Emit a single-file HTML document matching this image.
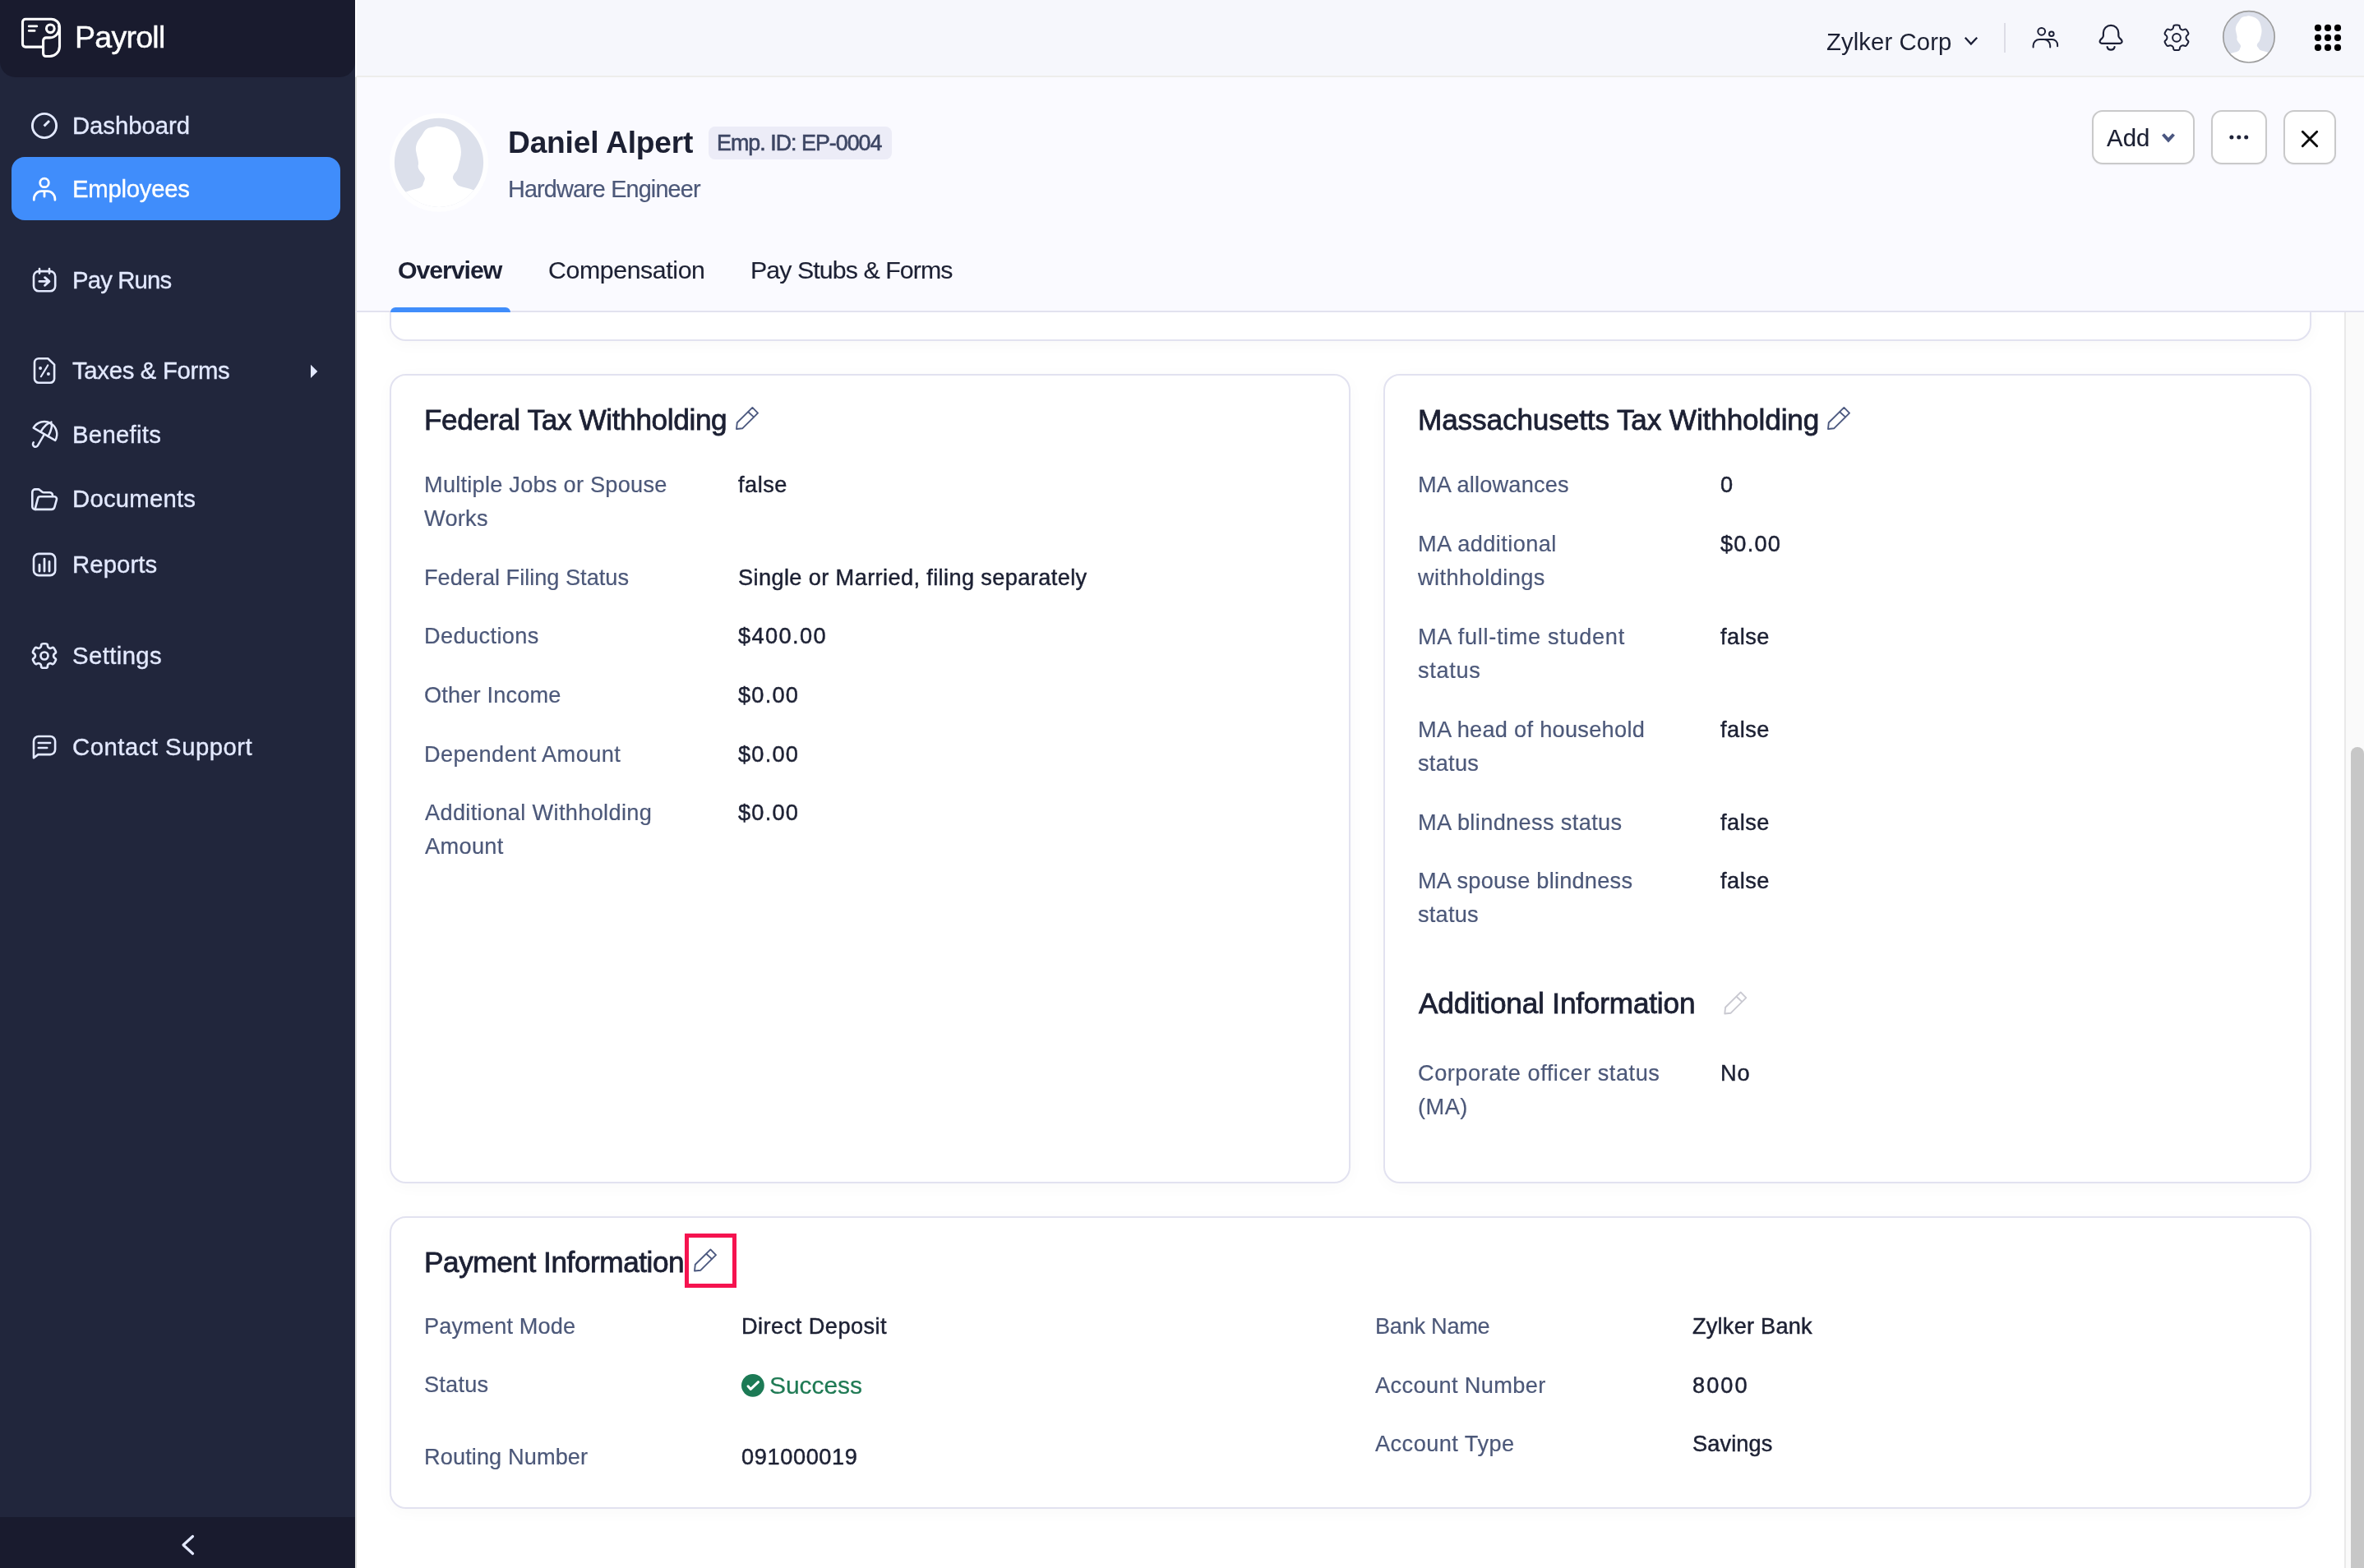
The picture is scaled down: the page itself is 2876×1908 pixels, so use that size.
<!DOCTYPE html>
<html lang="en"><head><meta charset="utf-8"><title>Payroll - Daniel Alpert</title>
<style>
*{box-sizing:border-box;margin:0;padding:0}
html,body{width:2876px;height:1908px;overflow:hidden;background:#fff}
body{position:relative;font-family:"Liberation Sans",sans-serif;}
.t{position:absolute;white-space:nowrap;will-change:transform}
.abs{position:absolute}
#sidebar{position:absolute;left:0;top:0;width:432px;height:1908px;background:#21263c}
#sbhead{position:absolute;left:0;top:0;width:432px;height:94px;background:#191b2e;border-radius:0 0 19px 19px}
#sbfoot{position:absolute;left:0;top:1846px;width:432px;height:62px;background:#191b2e}
#active{position:absolute;left:14px;top:191px;width:400px;height:77px;border-radius:16px;background:#408dfb}
#topbar{position:absolute;left:432px;top:0;width:2444px;height:94px;background:#f6f7fc;border-bottom:2px solid #ededeb;border-left:2px solid #fff}
#hdr{position:absolute;left:432px;top:94px;width:2444px;height:286px;background:#fafaff;border-left:2px solid #dfdfdd;border-bottom:2px solid #e2e2ef}
#content{position:absolute;left:432px;top:380px;width:2420px;height:1528px;background:#fff;border-left:2px solid #dfdfdd;overflow:hidden}
.card{position:absolute;background:#fff;border:2px solid #e2e2f0;border-radius:20px;box-shadow:0 4px 20px rgba(0,0,0,.028)}
#scroll{position:absolute;left:2852px;top:380px;width:24px;height:1528px;background:#fafafa;border-left:2px solid #e9e9e9}
#thumb{position:absolute;left:2860px;top:909px;width:16px;height:1010px;background:#c7c7c7;border-radius:8px}
.btn{position:absolute;top:134px;height:66px;background:#fff;border:2px solid #c9c9ca;border-radius:13px;box-shadow:0 1px 2px rgba(0,0,0,.04)}
svg{position:absolute;overflow:visible}

</style></head><body>
<div id="sidebar"><div id="sbhead"></div><div id="active"></div><div id="sbfoot"></div></div>
<div id="topbar"></div><div id="hdr"></div>
<div id="content">
<div class="card" style="left:40px;top:-40px;width:2338px;height:75px;"></div>
<div class="card" style="left:40px;top:75px;width:1169px;height:985px;"></div>
<div class="card" style="left:1249px;top:75px;width:1129px;height:985px;"></div>
<div class="card" style="left:40px;top:1100px;width:2338px;height:356px;"></div>
</div>
<div id="scroll"></div><div id="thumb"></div>
<div class="abs" style="left:475px;top:374px;width:146px;height:6px;background:#408dfb;border-radius:6px 6px 0 0"></div>
<nav aria-label="Main navigation">
<div class="t " style="left:91.20px;top:23.01px;font-size:37.6px;line-height:45.12px;color:#fff;letter-spacing:-0.772px;-webkit-text-stroke:0.4px #fff;">Payroll</div>
<div class="t " style="left:88.20px;top:134.87px;font-size:29.3px;line-height:35.16px;color:#e3e9ff;letter-spacing:-0.048px;-webkit-text-stroke:0.35px #e3e9ff;">Dashboard</div>
<div class="t " style="left:88.20px;top:212.12px;font-size:29.3px;line-height:35.16px;color:#fff;letter-spacing:-0.248px;-webkit-text-stroke:0.35px #fff;">Employees</div>
<div class="t " style="left:88.20px;top:322.87px;font-size:29.3px;line-height:35.16px;color:#e3e9ff;letter-spacing:-0.832px;-webkit-text-stroke:0.35px #e3e9ff;">Pay Runs</div>
<div class="t " style="left:88.20px;top:432.87px;font-size:29.3px;line-height:35.16px;color:#e3e9ff;letter-spacing:-0.305px;-webkit-text-stroke:0.35px #e3e9ff;">Taxes &amp; Forms</div>
<div class="t " style="left:88.20px;top:510.62px;font-size:29.3px;line-height:35.16px;color:#e3e9ff;letter-spacing:0.299px;-webkit-text-stroke:0.35px #e3e9ff;">Benefits</div>
<div class="t " style="left:88.20px;top:589.37px;font-size:29.3px;line-height:35.16px;color:#e3e9ff;letter-spacing:0.221px;-webkit-text-stroke:0.35px #e3e9ff;">Documents</div>
<div class="t " style="left:88.20px;top:668.62px;font-size:29.3px;line-height:35.16px;color:#e3e9ff;letter-spacing:0.102px;-webkit-text-stroke:0.35px #e3e9ff;">Reports</div>
<div class="t " style="left:88.20px;top:780.37px;font-size:29.3px;line-height:35.16px;color:#e3e9ff;letter-spacing:0.406px;-webkit-text-stroke:0.35px #e3e9ff;">Settings</div>
<div class="t " style="left:88.20px;top:891.12px;font-size:29.3px;line-height:35.16px;color:#e3e9ff;letter-spacing:0.499px;-webkit-text-stroke:0.35px #e3e9ff;">Contact Support</div>
</nav>
<header>
<div class="t " style="left:2221.80px;top:32.87px;font-size:29.3px;line-height:35.16px;color:#1c2033;letter-spacing:0.089px;">Zylker Corp</div>
<div class="abs" style="left:2438px;top:28px;width:2px;height:36px;background:#dddde6"></div>
<div class="t " style="left:617.60px;top:151.09px;font-size:37.2px;line-height:44.64px;color:#1c2033;letter-spacing:-0.213px;font-weight:700;">Daniel Alpert</div>
<div class="abs" style="left:862px;top:154px;width:223px;height:40px;background:#ececf7;border-radius:8px"></div>
<div class="t " style="left:872.00px;top:158.13px;font-size:26.8px;line-height:32.16px;color:#3d4663;letter-spacing:-0.967px;-webkit-text-stroke:0.6px #3d4663;">Emp. ID: EP-0004</div>
<div class="t " style="left:617.80px;top:212.74px;font-size:28.8px;line-height:34.56px;color:#4c5879;letter-spacing:-0.851px;-webkit-text-stroke:0.2px #4c5879;">Hardware Engineer</div>
<div class="t " style="left:484.40px;top:310.92px;font-size:30.3px;line-height:36.36px;color:#1c2033;letter-spacing:-1.066px;font-weight:700;">Overview</div>
<div class="t " style="left:667.00px;top:310.92px;font-size:30.3px;line-height:36.36px;color:#1c2033;letter-spacing:-0.399px;-webkit-text-stroke:0.15px #1c2033;">Compensation</div>
<div class="t " style="left:913.00px;top:310.92px;font-size:30.3px;line-height:36.36px;color:#1c2033;letter-spacing:-0.907px;-webkit-text-stroke:0.15px #1c2033;">Pay Stubs &amp; Forms</div>
<div class="btn" style="left:2545px;width:125px"></div>
<div class="btn" style="left:2690px;width:68px"></div>
<div class="btn" style="left:2778px;width:64px"></div>
<div class="t " style="left:2563.30px;top:149.57px;font-size:29.3px;line-height:35.16px;color:#1c2033;letter-spacing:0.086px;-webkit-text-stroke:0.15px #1c2033;">Add</div>
</header>
<main>
<section aria-label="Federal Tax Withholding">
<div class="t " style="left:516.30px;top:489.58px;font-size:35.2px;line-height:42.24px;color:#1c2033;letter-spacing:-0.372px;-webkit-text-stroke:0.8px #1c2033;">Federal Tax Withholding</div>
<div class="t " style="left:516.00px;top:568.83px;font-size:27.2px;line-height:41.1px;color:#4c5879;letter-spacing:0.236px;-webkit-text-stroke:0.2px #4c5879;">Multiple Jobs or Spouse<br>Works</div>
<div class="t " style="left:897.50px;top:568.83px;font-size:27.2px;line-height:41.1px;color:#1c2033;letter-spacing:0.486px;-webkit-text-stroke:0.45px #1c2033;">false</div>
<div class="t " style="left:516.00px;top:681.63px;font-size:27.2px;line-height:41.1px;color:#4c5879;letter-spacing:-0.018px;-webkit-text-stroke:0.2px #4c5879;">Federal Filing Status</div>
<div class="t " style="left:897.50px;top:681.63px;font-size:27.2px;line-height:41.1px;color:#1c2033;letter-spacing:0.376px;-webkit-text-stroke:0.45px #1c2033;">Single or Married, filing separately</div>
<div class="t " style="left:516.00px;top:753.43px;font-size:27.2px;line-height:41.1px;color:#4c5879;letter-spacing:0.379px;-webkit-text-stroke:0.2px #4c5879;">Deductions</div>
<div class="t " style="left:897.50px;top:753.43px;font-size:27.2px;line-height:41.1px;color:#1c2033;letter-spacing:1.395px;-webkit-text-stroke:0.45px #1c2033;">$400.00</div>
<div class="t " style="left:516.00px;top:825.13px;font-size:27.2px;line-height:41.1px;color:#4c5879;letter-spacing:0.156px;-webkit-text-stroke:0.2px #4c5879;">Other Income</div>
<div class="t " style="left:897.50px;top:825.13px;font-size:27.2px;line-height:41.1px;color:#1c2033;letter-spacing:1.232px;-webkit-text-stroke:0.45px #1c2033;">$0.00</div>
<div class="t " style="left:516.00px;top:896.73px;font-size:27.2px;line-height:41.1px;color:#4c5879;letter-spacing:0.400px;-webkit-text-stroke:0.2px #4c5879;">Dependent Amount</div>
<div class="t " style="left:897.50px;top:896.73px;font-size:27.2px;line-height:41.1px;color:#1c2033;letter-spacing:1.232px;-webkit-text-stroke:0.45px #1c2033;">$0.00</div>
<div class="t " style="left:517.00px;top:968.43px;font-size:27.2px;line-height:41.1px;color:#4c5879;letter-spacing:0.326px;-webkit-text-stroke:0.2px #4c5879;">Additional Withholding<br>Amount</div>
<div class="t " style="left:897.50px;top:968.43px;font-size:27.2px;line-height:41.1px;color:#1c2033;letter-spacing:1.232px;-webkit-text-stroke:0.45px #1c2033;">$0.00</div>
</section><section aria-label="Massachusetts Tax Withholding">
<div class="t " style="left:1725.30px;top:489.58px;font-size:35.2px;line-height:42.24px;color:#1c2033;letter-spacing:-0.139px;-webkit-text-stroke:0.8px #1c2033;">Massachusetts Tax Withholding</div>
<div class="t " style="left:1725.00px;top:568.83px;font-size:27.2px;line-height:41.1px;color:#4c5879;letter-spacing:0.198px;-webkit-text-stroke:0.2px #4c5879;">MA allowances</div>
<div class="t " style="left:2092.80px;top:568.83px;font-size:27.2px;line-height:41.1px;color:#1c2033;letter-spacing:2.172px;-webkit-text-stroke:0.45px #1c2033;">0</div>
<div class="t " style="left:1725.00px;top:640.73px;font-size:27.2px;line-height:41.1px;color:#4c5879;letter-spacing:0.432px;-webkit-text-stroke:0.2px #4c5879;">MA additional<br>withholdings</div>
<div class="t " style="left:2092.80px;top:640.73px;font-size:27.2px;line-height:41.1px;color:#1c2033;letter-spacing:1.232px;-webkit-text-stroke:0.45px #1c2033;">$0.00</div>
<div class="t " style="left:1725.00px;top:753.53px;font-size:27.2px;line-height:41.1px;color:#4c5879;letter-spacing:0.655px;-webkit-text-stroke:0.2px #4c5879;">MA full-time student<br>status</div>
<div class="t " style="left:2092.80px;top:753.53px;font-size:27.2px;line-height:41.1px;color:#1c2033;letter-spacing:0.486px;-webkit-text-stroke:0.45px #1c2033;">false</div>
<div class="t " style="left:1725.00px;top:866.63px;font-size:27.2px;line-height:41.1px;color:#4c5879;letter-spacing:0.278px;-webkit-text-stroke:0.2px #4c5879;">MA head of household<br>status</div>
<div class="t " style="left:2092.80px;top:866.63px;font-size:27.2px;line-height:41.1px;color:#1c2033;letter-spacing:0.486px;-webkit-text-stroke:0.45px #1c2033;">false</div>
<div class="t " style="left:1725.00px;top:979.63px;font-size:27.2px;line-height:41.1px;color:#4c5879;letter-spacing:0.355px;-webkit-text-stroke:0.2px #4c5879;">MA blindness status</div>
<div class="t " style="left:2092.80px;top:979.63px;font-size:27.2px;line-height:41.1px;color:#1c2033;letter-spacing:0.486px;-webkit-text-stroke:0.45px #1c2033;">false</div>
<div class="t " style="left:1725.00px;top:1051.33px;font-size:27.2px;line-height:41.1px;color:#4c5879;letter-spacing:0.225px;-webkit-text-stroke:0.2px #4c5879;">MA spouse blindness<br>status</div>
<div class="t " style="left:2092.80px;top:1051.33px;font-size:27.2px;line-height:41.1px;color:#1c2033;letter-spacing:0.486px;-webkit-text-stroke:0.45px #1c2033;">false</div>
<div class="t " style="left:1726.10px;top:1200.08px;font-size:35.2px;line-height:42.24px;color:#1c2033;letter-spacing:-0.185px;-webkit-text-stroke:0.8px #1c2033;">Additional Information</div>
<div class="t " style="left:1725.00px;top:1285.23px;font-size:27.2px;line-height:41.1px;color:#4c5879;letter-spacing:0.512px;-webkit-text-stroke:0.2px #4c5879;">Corporate officer status<br>(MA)</div>
<div class="t " style="left:2092.80px;top:1285.23px;font-size:27.2px;line-height:41.1px;color:#1c2033;letter-spacing:0.928px;-webkit-text-stroke:0.45px #1c2033;">No</div>
</section><section aria-label="Payment Information">
<div class="t " style="left:516.30px;top:1514.58px;font-size:35.2px;line-height:42.24px;color:#1c2033;letter-spacing:-0.443px;-webkit-text-stroke:0.8px #1c2033;">Payment Information</div>
<div class="abs" style="left:833px;top:1501px;width:63px;height:66px;border:5px solid #f5134f"></div>
<div class="t " style="left:516.00px;top:1592.93px;font-size:27.2px;line-height:41.1px;color:#4c5879;letter-spacing:0.114px;-webkit-text-stroke:0.2px #4c5879;">Payment Mode</div>
<div class="t " style="left:901.50px;top:1592.93px;font-size:27.2px;line-height:41.1px;color:#1c2033;letter-spacing:0.453px;-webkit-text-stroke:0.45px #1c2033;">Direct Deposit</div>
<div class="t " style="left:516.00px;top:1663.93px;font-size:27.2px;line-height:41.1px;color:#4c5879;letter-spacing:0.218px;-webkit-text-stroke:0.2px #4c5879;">Status</div>
<div class="t " style="left:936.30px;top:1668.00px;font-size:30px;line-height:36.0px;color:#1f7a54;letter-spacing:-0.063px;-webkit-text-stroke:0.2px #1f7a54;">Success</div>
<div class="t " style="left:516.00px;top:1752.33px;font-size:27.2px;line-height:41.1px;color:#4c5879;letter-spacing:0.088px;-webkit-text-stroke:0.2px #4c5879;">Routing Number</div>
<div class="t " style="left:901.50px;top:1752.33px;font-size:27.2px;line-height:41.1px;color:#1c2033;letter-spacing:0.606px;-webkit-text-stroke:0.45px #1c2033;">091000019</div>
<div class="t " style="left:1673.00px;top:1592.93px;font-size:27.2px;line-height:41.1px;color:#4c5879;letter-spacing:-0.289px;-webkit-text-stroke:0.2px #4c5879;">Bank Name</div>
<div class="t " style="left:2058.80px;top:1592.93px;font-size:27.2px;line-height:41.1px;color:#1c2033;letter-spacing:0.210px;-webkit-text-stroke:0.45px #1c2033;">Zylker Bank</div>
<div class="t " style="left:1673.00px;top:1664.63px;font-size:27.2px;line-height:41.1px;color:#4c5879;letter-spacing:0.378px;-webkit-text-stroke:0.2px #4c5879;">Account Number</div>
<div class="t " style="left:2058.80px;top:1664.63px;font-size:27.2px;line-height:41.1px;color:#1c2033;letter-spacing:2.062px;-webkit-text-stroke:0.45px #1c2033;">8000</div>
<div class="t " style="left:1673.00px;top:1736.33px;font-size:27.2px;line-height:41.1px;color:#4c5879;letter-spacing:0.444px;-webkit-text-stroke:0.2px #4c5879;">Account Type</div>
<div class="t " style="left:2058.80px;top:1736.33px;font-size:27.2px;line-height:41.1px;color:#1c2033;letter-spacing:0.105px;-webkit-text-stroke:0.45px #1c2033;">Savings</div>
</section></main>
<svg width="2876" height="1908" viewBox="0 0 2876 1908" style="left:0;top:0;pointer-events:none" fill="none" stroke-linecap="round" stroke-linejoin="round" ><g stroke="#fff" stroke-width="3.1"><path d="M52.6 57.1H31A3.5 3.5 0 0 1 27.5 53.6V26.7A3.5 3.5 0 0 1 31 23.2H62.3A10.2 10.2 0 0 1 72.5 33.4V56.5A12 12 0 0 1 60.5 68.5H55.8A3.2 3.2 0 0 1 52.6 65.3V49.4A3.5 3.5 0 0 1 56.1 45.9H60.5A11.5 11.5 0 0 0 71.6 31.4"/><path d="M35.2 31.9H44.8M35.2 37.4H42.1" stroke-width="2.8"/><circle cx="61.3" cy="34.8" r="4.85"/></g><g stroke="#e3e9ff" stroke-width="2.9"><circle cx="54" cy="153" r="14.6"/><path d="M53.6 153.4L60 147" stroke-linecap="butt"/></g><g stroke="#fff" stroke-width="2.8"><circle cx="54" cy="222.4" r="5.3"/><path d="M41.3 243.3v-1.3a9.3 9.3 0 0 1 9.3-9.3h7a9.3 9.3 0 0 1 9.3 9.3v1.3M54 233v6.2"/></g><g stroke="#e3e9ff" stroke-width="2.6"><rect x="41" y="330.1" width="26.2" height="24.2" rx="6.2"/><path d="M48 327v5.6M60 327v5.6"/><path d="M47.9 342.4H59.6M54.6 337.7L59.9 342.4L54.6 347.3" stroke-width="2.9"/></g><g stroke="#e3e9ff" stroke-width="2.6"><path d="M47 436.3H58.3L66.1 443.6V460.7A5 5 0 0 1 61.1 465.7H47A5 5 0 0 1 42 460.7V441.3A5 5 0 0 1 47 436.3Z"/><path d="M58.2 444.5L49.9 458.2" stroke-width="2.2"/><circle cx="49.1" cy="448" r="2" fill="#e3e9ff" stroke="none"/><circle cx="58.9" cy="455.1" r="2" fill="#e3e9ff" stroke="none"/></g><path d="M378 443.7L386.3 451.9L378 460Z" fill="#e3e9ff" stroke="none"/><g stroke="#e3e9ff" stroke-width="2.5" transform="translate(53.95 528.3) rotate(30)"><path d="M-15.3 0A15.3 15.3 0 0 1 15.3 0Z"/><path d="M0 -15.3A5.3 15.3 0 0 0 -5.3 0M0 -15.3A5.3 15.3 0 0 1 5.3 0M0 -15.3V-17"/><path d="M0 0V16A3.2 3.2 0 0 1 -6.4 16V15.3"/></g><g stroke="#e3e9ff" stroke-width="2.6"><path d="M43 619.9H42.8A3.5 3.5 0 0 1 39.3 616.4V599A3.6 3.6 0 0 1 42.9 595.4H46.3Q47.5 595.4 48.4 596.2L51.2 598.5Q52.1 599.2 53.3 599.2H60.3A3.7 3.7 0 0 1 64 602.9V604"/><path d="M42.6 619.7L46 606.6A3 3 0 0 1 48.9 604.3H66.2A2.8 2.8 0 0 1 68.9 607.9L66.4 616.9A4 4 0 0 1 62.5 619.9H43"/></g><g stroke="#e3e9ff" stroke-width="2.6"><rect x="41" y="673.9" width="26.2" height="26.2" rx="6.2"/><path d="M48 687.2V695M54 680.2V695M60 683.4V695" stroke-width="2.8"/></g><g stroke="#e3e9ff" stroke-width="2.7"><path d="M59.12 788.07Q58.05 787.45 57.92 785.98L57.81 784.72Q57.68 783.25 55.10 783.25L52.90 783.25Q50.32 783.25 50.19 784.72L50.08 785.98Q49.95 787.45 48.88 788.07L47.96 788.60Q46.89 789.22 45.55 788.60L44.40 788.06Q43.07 787.44 41.78 789.67L40.68 791.58Q39.39 793.81 40.60 794.66L41.63 795.38Q42.84 796.23 42.84 797.47L42.84 798.53Q42.84 799.77 41.63 800.62L40.60 801.34Q39.39 802.19 40.68 804.42L41.78 806.33Q43.07 808.56 44.40 807.94L45.55 807.40Q46.89 806.78 47.96 807.40L48.88 807.93Q49.95 808.55 50.08 810.02L50.19 811.28Q50.32 812.75 52.90 812.75L55.10 812.75Q57.68 812.75 57.81 811.28L57.92 810.02Q58.05 808.55 59.12 807.93L60.04 807.40Q61.11 806.78 62.45 807.40L63.60 807.94Q64.93 808.56 66.22 806.33L67.32 804.42Q68.61 802.19 67.40 801.34L66.37 800.62Q65.16 799.77 65.16 798.53L65.16 797.47Q65.16 796.23 66.37 795.38L67.40 794.66Q68.61 793.81 67.32 791.58L66.22 789.67Q64.93 787.44 63.60 788.06L62.45 788.60Q61.11 789.22 60.04 788.60Z"/><circle cx="54" cy="798" r="4.5"/></g><g stroke="#e3e9ff" stroke-width="2.6"><path d="M41 922.2V902A6 6 0 0 1 47 896H61.1A6 6 0 0 1 67.1 902V912.1A6 6 0 0 1 61.1 918.1H46.3Z"/><path d="M46.8 904H61.1M46.8 910H57.2"/></g><path d="M234.5 1869.5L223 1880L234.5 1890.5" stroke="#e3e9ff" stroke-width="3.2"/></svg>
<svg width="2876" height="1908" viewBox="0 0 2876 1908" style="left:0;top:0;pointer-events:none" fill="none" stroke-linecap="round" stroke-linejoin="round" ><path d="M2390.8 45.8L2397.9 53.6L2405.2 45.8" stroke="#1b1f36" stroke-width="2.3" stroke-linecap="butt" stroke-linejoin="miter"/><g stroke="#1b1f36" stroke-width="2"><circle cx="2483.7" cy="38.3" r="4.4"/><circle cx="2495.8" cy="41.25" r="2.8"/><path d="M2473.6 57.4V55.5A7.5 7.5 0 0 1 2481.1 48H2486.7A7.5 7.5 0 0 1 2494.2 55.5V57.4"/><path d="M2488.5 48H2496.6A6.5 6.5 0 0 1 2503.1 54.5V56.3"/></g><g stroke="#1b1f36" stroke-width="2.2"><path d="M2558.9 40.1A9.2 9.2 0 0 1 2577.3 40.1V43.2Q2577.3 45 2578.6 46.2L2580.3 47.9Q2581.6 49.2 2581.6 50.4A2.4 2.4 0 0 1 2579.2 52.8H2557A2.4 2.4 0 0 1 2554.6 50.4Q2554.6 49.2 2555.9 47.9L2557.6 46.2Q2558.9 45 2558.9 43.2Z"/><path d="M2563.6 57A4.6 4.6 0 0 0 2572.6 57"/></g><g stroke="#1b1f36" stroke-width="2"><path d="M2653.30 35.52Q2652.19 34.88 2651.96 33.35L2651.76 32.03Q2651.53 30.50 2649.06 30.50L2646.94 30.50Q2644.47 30.50 2644.24 32.03L2644.04 33.35Q2643.81 34.88 2642.70 35.52L2641.75 36.07Q2640.64 36.71 2639.20 36.14L2637.96 35.66Q2636.52 35.09 2635.28 37.23L2634.22 39.07Q2632.99 41.21 2634.20 42.18L2635.23 43.00Q2636.44 43.97 2636.44 45.25L2636.44 46.35Q2636.44 47.63 2635.23 48.60L2634.20 49.42Q2632.99 50.39 2634.22 52.53L2635.28 54.37Q2636.52 56.51 2637.96 55.94L2639.20 55.46Q2640.64 54.89 2641.75 55.53L2642.70 56.08Q2643.81 56.72 2644.04 58.25L2644.24 59.57Q2644.47 61.10 2646.94 61.10L2649.06 61.10Q2651.53 61.10 2651.76 59.57L2651.96 58.25Q2652.19 56.72 2653.30 56.08L2654.25 55.53Q2655.36 54.89 2656.80 55.46L2658.04 55.94Q2659.48 56.51 2660.72 54.37L2661.78 52.53Q2663.01 50.39 2661.80 49.42L2660.77 48.60Q2659.56 47.63 2659.56 46.35L2659.56 45.25Q2659.56 43.97 2660.77 43.00L2661.80 42.18Q2663.01 41.21 2661.78 39.07L2660.72 37.23Q2659.48 35.09 2658.04 35.66L2656.80 36.14Q2655.36 36.71 2654.25 36.07Z"/><circle cx="2648" cy="45.8" r="4.9"/></g><circle cx="2820" cy="33.9" r="4.1" fill="#000"/><circle cx="2820" cy="45.9" r="4.1" fill="#000"/><circle cx="2820" cy="57.9" r="4.1" fill="#000"/><circle cx="2832" cy="33.9" r="4.1" fill="#000"/><circle cx="2832" cy="45.9" r="4.1" fill="#000"/><circle cx="2832" cy="57.9" r="4.1" fill="#000"/><circle cx="2844" cy="33.9" r="4.1" fill="#000"/><circle cx="2844" cy="45.9" r="4.1" fill="#000"/><circle cx="2844" cy="57.9" r="4.1" fill="#000"/></svg>
<svg width="2876" height="1908" viewBox="0 0 2876 1908" style="left:0;top:0;pointer-events:none" fill="none" stroke-linecap="round" stroke-linejoin="round" ><defs><clipPath id="c1"><circle cx="0" cy="0" r="54"/></clipPath></defs><g transform="translate(2736 44.8) scale(0.5778)"><circle r="54" fill="#dce0eb"/><path d="M-3.1 -43.9Q-0.4 -44.6 7.2 -42.4Q14.8 -40.1 18.9 -35.9Q22.9 -31.6 24.9 -24.5Q26.9 -17.3 26.9 -12.9Q26.9 -8.4 25.8 -4.0Q24.6 0.5 23.3 5.5Q22.0 10.4 20.2 11.7Q18.4 13.0 17.3 16.1Q16.2 19.3 18.2 21.3Q20.2 23.3 21.5 25.8Q22.9 28.2 27.8 29.3Q32.7 30.4 37.6 32.0Q42.5 33.6 51.2 36.8Q60.0 40.0 60.0 55.0Q60.0 70.0 0.0 70.0Q-60.0 70.0 -60.0 56.0Q-60.0 42.0 -50.2 38.9Q-40.5 35.8 -35.6 34.2Q-30.7 32.7 -25.5 31.4Q-20.4 30.0 -19.5 26.9Q-18.7 23.8 -17.6 21.6Q-16.6 19.3 -17.9 17.1Q-19.1 14.8 -21.1 12.8Q-23.1 10.8 -24.5 7.9Q-25.8 5.0 -25.1 2.8Q-24.5 0.5 -25.8 -4.8Q-27.1 -10.2 -27.8 -13.8Q-28.5 -17.3 -27.4 -21.4Q-26.3 -25.4 -23.6 -28.9Q-20.9 -32.5 -18.2 -37.2Q-15.5 -41.9 -10.6 -42.5Q-5.7 -43.2 -3.1 -43.9Z" fill="#fff" clip-path="url(#c1)"/></g><circle cx="2736" cy="44.8" r="31.2" stroke="#9d9d9d" stroke-width="1.7"/></svg>
<svg width="2876" height="1908" viewBox="0 0 2876 1908" style="left:0;top:0;pointer-events:none" fill="none" stroke-linecap="round" stroke-linejoin="round" ><circle cx="534" cy="197.8" r="60" fill="#fefeff"/><defs><clipPath id="c2"><circle cx="0" cy="0" r="54"/></clipPath></defs><g transform="translate(534 197.8) scale(1.0019)"><circle r="54" fill="#dce0eb"/><path d="M-3.1 -43.9Q-0.4 -44.6 7.2 -42.4Q14.8 -40.1 18.9 -35.9Q22.9 -31.6 24.9 -24.5Q26.9 -17.3 26.9 -12.9Q26.9 -8.4 25.8 -4.0Q24.6 0.5 23.3 5.5Q22.0 10.4 20.2 11.7Q18.4 13.0 17.3 16.1Q16.2 19.3 18.2 21.3Q20.2 23.3 21.5 25.8Q22.9 28.2 27.8 29.3Q32.7 30.4 37.6 32.0Q42.5 33.6 51.2 36.8Q60.0 40.0 60.0 55.0Q60.0 70.0 0.0 70.0Q-60.0 70.0 -60.0 56.0Q-60.0 42.0 -50.2 38.9Q-40.5 35.8 -35.6 34.2Q-30.7 32.7 -25.5 31.4Q-20.4 30.0 -19.5 26.9Q-18.7 23.8 -17.6 21.6Q-16.6 19.3 -17.9 17.1Q-19.1 14.8 -21.1 12.8Q-23.1 10.8 -24.5 7.9Q-25.8 5.0 -25.1 2.8Q-24.5 0.5 -25.8 -4.8Q-27.1 -10.2 -27.8 -13.8Q-28.5 -17.3 -27.4 -21.4Q-26.3 -25.4 -23.6 -28.9Q-20.9 -32.5 -18.2 -37.2Q-15.5 -41.9 -10.6 -42.5Q-5.7 -43.2 -3.1 -43.9Z" fill="#fff" clip-path="url(#c2)"/></g></svg>
<svg width="2876" height="1908" viewBox="0 0 2876 1908" style="left:0;top:0;pointer-events:none" fill="none" stroke-linecap="round" stroke-linejoin="round" ><path d="M2631.5 163.5L2638 170.5L2644.5 163.5" stroke="#4a5680" stroke-width="4" stroke-linecap="butt" stroke-linejoin="miter"/><circle cx="2714.9" cy="167" r="2.5" fill="#1f2338"/><circle cx="2723.8" cy="167" r="2.5" fill="#1f2338"/><circle cx="2732.7" cy="167" r="2.5" fill="#1f2338"/><path d="M2801.3 160.3L2818.7 177.7M2818.7 160.3L2801.3 177.7" stroke="#0c0c0c" stroke-width="2.9" stroke-linecap="round"/></svg>
<svg width="2876" height="1908" viewBox="0 0 2876 1908" style="left:0;top:0;pointer-events:none" fill="none" stroke-linecap="round" stroke-linejoin="round" ><g transform="translate(895 495)" stroke="#4d5a80" stroke-width="1.9"><path d="M20.4 0.9L27 7.7L8.4 26.2L1 27L1.8 19.3Z"/><path d="M15.3 6.3L21.9 12.4"/></g><g transform="translate(2223 495)" stroke="#4d5a80" stroke-width="1.9"><path d="M20.4 0.9L27 7.7L8.4 26.2L1 27L1.8 19.3Z"/><path d="M15.3 6.3L21.9 12.4"/></g><g transform="translate(2097.3 1206.5)" stroke="#c9c9d1" stroke-width="1.9"><path d="M20.4 0.9L27 7.7L8.4 26.2L1 27L1.8 19.3Z"/><path d="M15.3 6.3L21.9 12.4"/></g><g transform="translate(844 1519.5)" stroke="#4d5a80" stroke-width="1.9"><path d="M20.4 0.9L27 7.7L8.4 26.2L1 27L1.8 19.3Z"/><path d="M15.3 6.3L21.9 12.4"/></g><circle cx="915.9" cy="1685.8" r="13.9" fill="#1c7a55"/><path d="M910 1686.8L913.3 1690.4L922.5 1681.7" stroke="#fff" stroke-width="3"/></svg>
</body></html>
